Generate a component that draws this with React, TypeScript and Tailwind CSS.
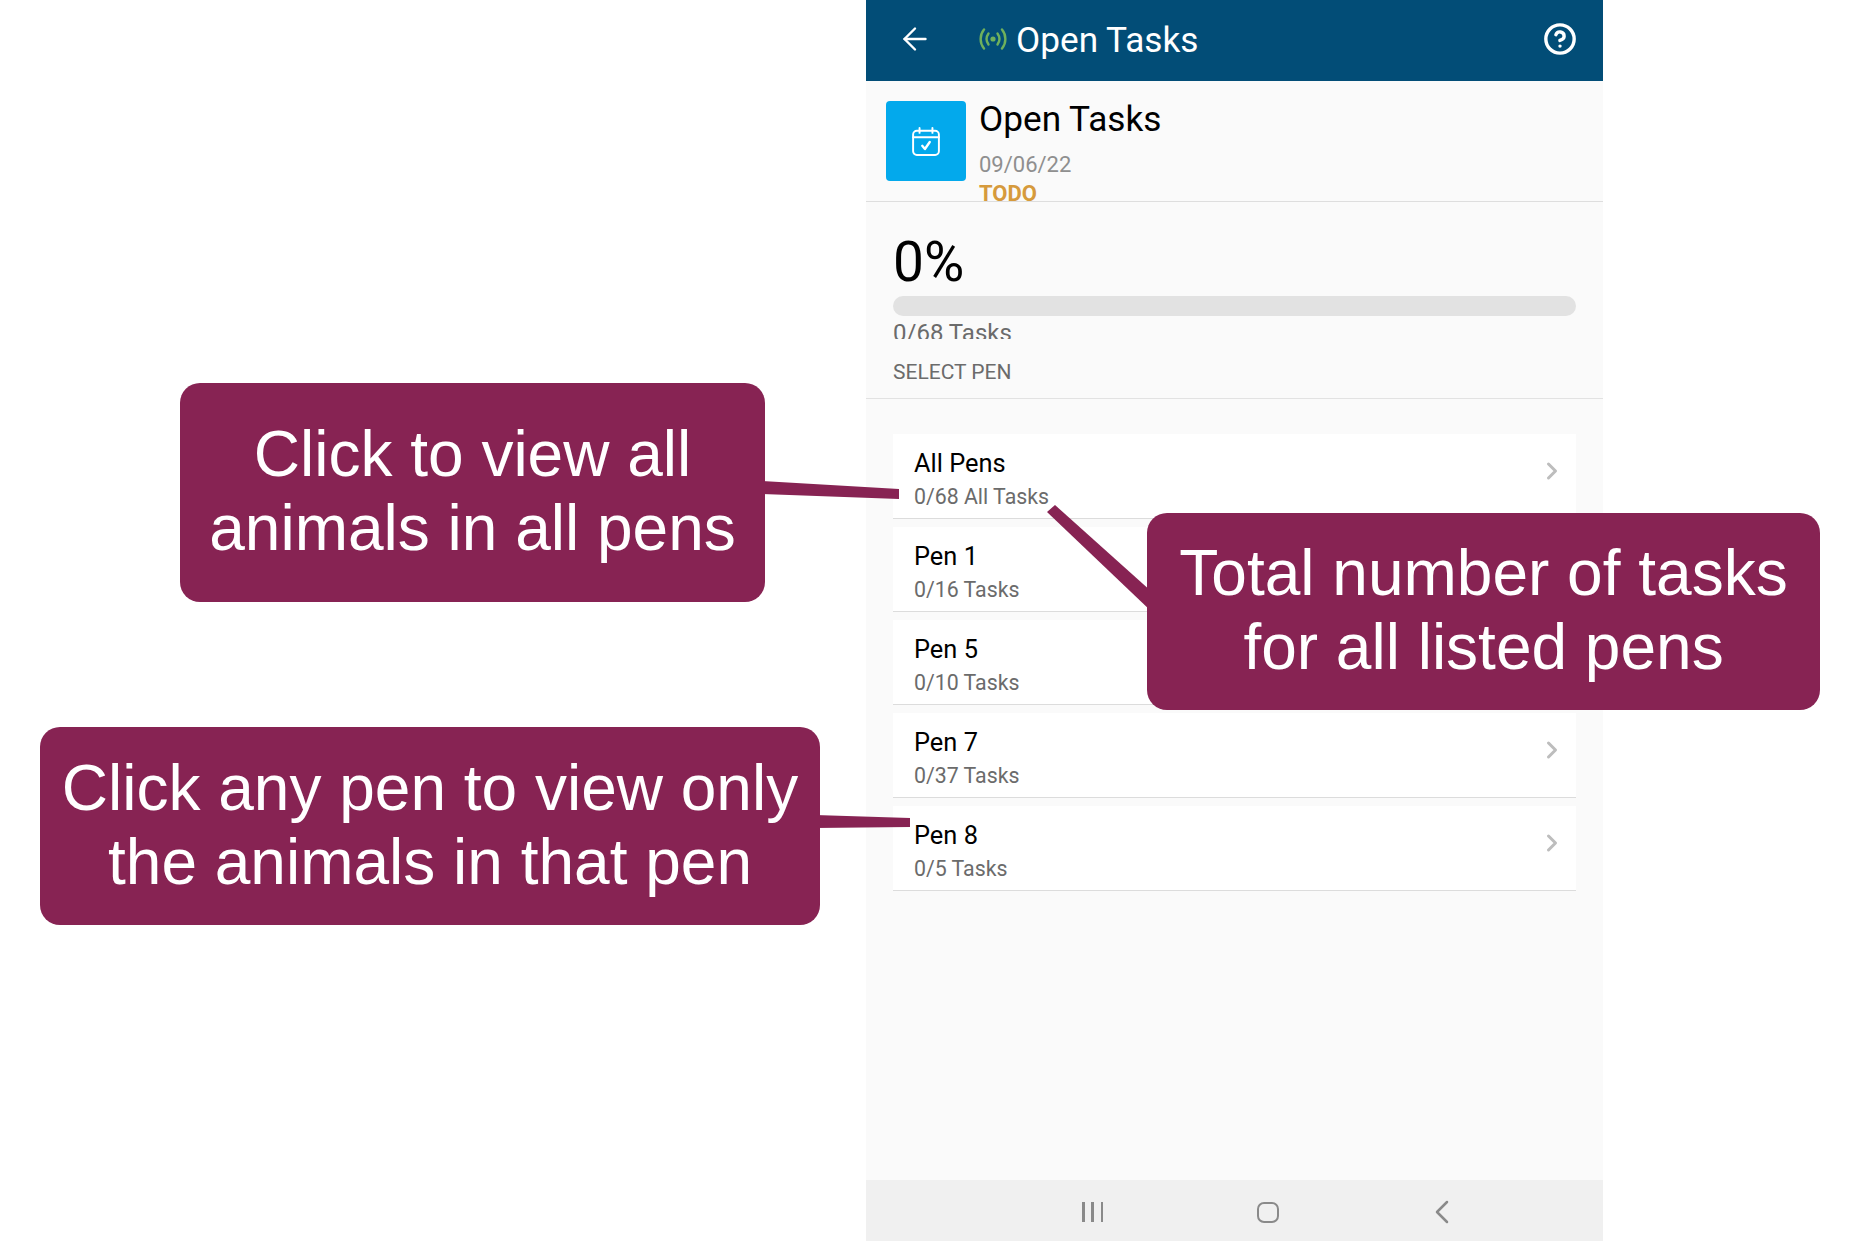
import { ArrowLeft, ChevronLeft, ChevronRight, CircleHelp } from "lucide-react";

const pens = [
  { name: "All Pens", tasks: "0/68 All Tasks" },
  { name: "Pen 1", tasks: "0/16 Tasks" },
  { name: "Pen 5", tasks: "0/10 Tasks" },
  { name: "Pen 7", tasks: "0/37 Tasks" },
  { name: "Pen 8", tasks: "0/5 Tasks" },
];

function PenRow({ name, tasks }: { name: string; tasks: string }) {
  return (
    <div className="flex h-[85px] items-center justify-between border-b border-[#dcdcdc] bg-white pl-[21px] pr-[10px]">
      <div className="flex flex-col pt-[7px]">
        <div className="-mt-[1px] text-[25.4px] leading-[34px] text-black">{name}</div>
        <div className="mt-[1.5px] text-[21.3px] leading-[30px] text-[#6b6b6b]">{tasks}</div>
      </div>
      <ChevronRight className="mb-[10px] h-7 w-7 text-[#bdbdbd]" strokeWidth={2.6} />
    </div>
  );
}

function Callout({ className, lines }: { className: string; lines: string[] }) {
  return (
    <div className={`absolute flex flex-col items-center justify-center rounded-[20px] bg-[#872353] pb-[3px] font-['Liberation_Sans',sans-serif] text-[64px] leading-[74px] text-white ${className}`}>
      {lines.map((line) => (
        <div key={line} className="whitespace-nowrap">{line}</div>
      ))}
    </div>
  );
}

export default function App() {
  return (
    <div className="relative h-[1241px] w-[1865px] overflow-hidden bg-white font-['Roboto',sans-serif]">
      <div className="ml-[866px] flex h-full w-[737px] flex-col bg-[#fafafa]">
        <div className="flex h-[81px] shrink-0 items-center bg-[#024d77] pl-[31px] pr-[26px] text-white">
          <ArrowLeft className="-mt-[3px] h-[36px] w-[36px]" strokeWidth={1.6} />
          <svg className="-mt-[3px] ml-[46px] h-[22px] w-[28px]" viewBox="0 0 28 22" fill="none" stroke="#6fb05c" strokeWidth="2.4" strokeLinecap="round">
            <path d="M5 1.5C0.5 7 0.5 15 5 20.5" />
            <path d="M9.5 5.5C7 9 7 13 9.5 16.5" />
            <path d="M18.5 5.5C21 9 21 13 18.5 16.5" />
            <path d="M23 1.5C27.5 7 27.5 15 23 20.5" />
            <circle cx="14" cy="11" r="2.6" fill="#6fb05c" stroke="none" />
          </svg>
          <div className="-mt-[2px] ml-[9px] text-[35.2px] leading-[40px]">Open Tasks</div>
          <CircleHelp className="-mt-[4px] ml-auto h-[34px] w-[34px]" strokeWidth={2.4} />
        </div>

        <div className="flex h-[121px] shrink-0 overflow-hidden border-b border-[#dedede] pl-[20px] pt-[20px]">
          <div className="flex h-[80px] w-[80px] shrink-0 items-center justify-center rounded-[4px] bg-[#03a9ec]">
            <svg className="h-[29px] w-[28px]" viewBox="0 0 26 27" fill="none" stroke="#fff" strokeWidth="1.8" strokeLinecap="round" strokeLinejoin="round">
              <rect x="1" y="3.5" width="24" height="22.5" rx="3.5" />
              <path d="M1 9.5H25" />
              <path d="M7 1V5.5" />
              <path d="M19 1V5.5" />
              <path d="M9.5 17.5L12 20.5L16.5 14" strokeWidth="2.2" />
            </svg>
          </div>
          <div className="ml-[13px] flex flex-col">
            <div className="-mt-[2px] text-[35.2px] leading-[40px] text-black">Open Tasks</div>
            <div className="mt-[10px] text-[22px] leading-[31px] text-[#8f8f8f]">09/06/22</div>
            <div className="text-[22px] font-bold leading-[28px] text-[#d69a3c]">TODO</div>
          </div>
        </div>

        <div className="flex h-[197px] shrink-0 flex-col border-b border-[#e2e2e2] px-[27px]">
          <div className="mt-[28px] text-[55px] leading-[64px] text-black">0%</div>
          <div className="mt-[2px] h-[20px] w-full rounded-full bg-[#e2e2e2]"></div>
          <div className="h-[23px] overflow-hidden pt-[2px] text-[24px] leading-[30px] text-[#6b6b6b]">0/68 Tasks</div>
          <div className="mt-[19px] text-[21px] leading-[28px] text-[#6b6b6b]">SELECT PEN</div>
        </div>

        <div className="flex flex-col gap-[8px] px-[27px] pt-[35px]">
          {pens.map((pen) => (
            <PenRow key={pen.name} name={pen.name} tasks={pen.tasks} />
          ))}
        </div>

        <div className="mt-auto flex h-[61px] shrink-0 items-center bg-[#f0f0f0] pl-[216px] pt-[3px] text-[#8a8a8a]">
          <div className="flex h-[20px] w-[21px] items-center justify-between">
            <div className="h-[20px] w-[2.5px] bg-[#8a8a8a]"></div>
            <div className="h-[20px] w-[2.5px] bg-[#8a8a8a]"></div>
            <div className="h-[20px] w-[2.5px] bg-[#8a8a8a]"></div>
          </div>
          <div className="ml-[154px] h-[21px] w-[22px] rounded-[7px] border-[2.5px] border-[#8a8a8a]"></div>
          <ChevronLeft className="ml-[143px] h-[40px] w-[40px]" strokeWidth={1.5} />
        </div>
      </div>

      <svg className="absolute left-0 top-0 h-[1241px] w-[1865px]" viewBox="0 0 1865 1241">
        <polygon points="760,481 899,489 899,499 760,494" fill="#872353" />
        <polygon points="1047,512 1055,505 1152,592 1152,612" fill="#872353" />
        <polygon points="815,815 910,818 910,827 815,828" fill="#872353" />
      </svg>

      <Callout className="left-[180px] top-[383px] h-[219px] w-[585px]" lines={["Click to view all", "animals in all pens"]} />
      <Callout className="left-[1147px] top-[513px] h-[197px] w-[673px]" lines={["Total number of tasks", "for all listed pens"]} />
      <Callout className="left-[40px] top-[727px] h-[198px] w-[780px]" lines={["Click any pen to view only", "the animals in that pen"]} />
    </div>
  );
}
